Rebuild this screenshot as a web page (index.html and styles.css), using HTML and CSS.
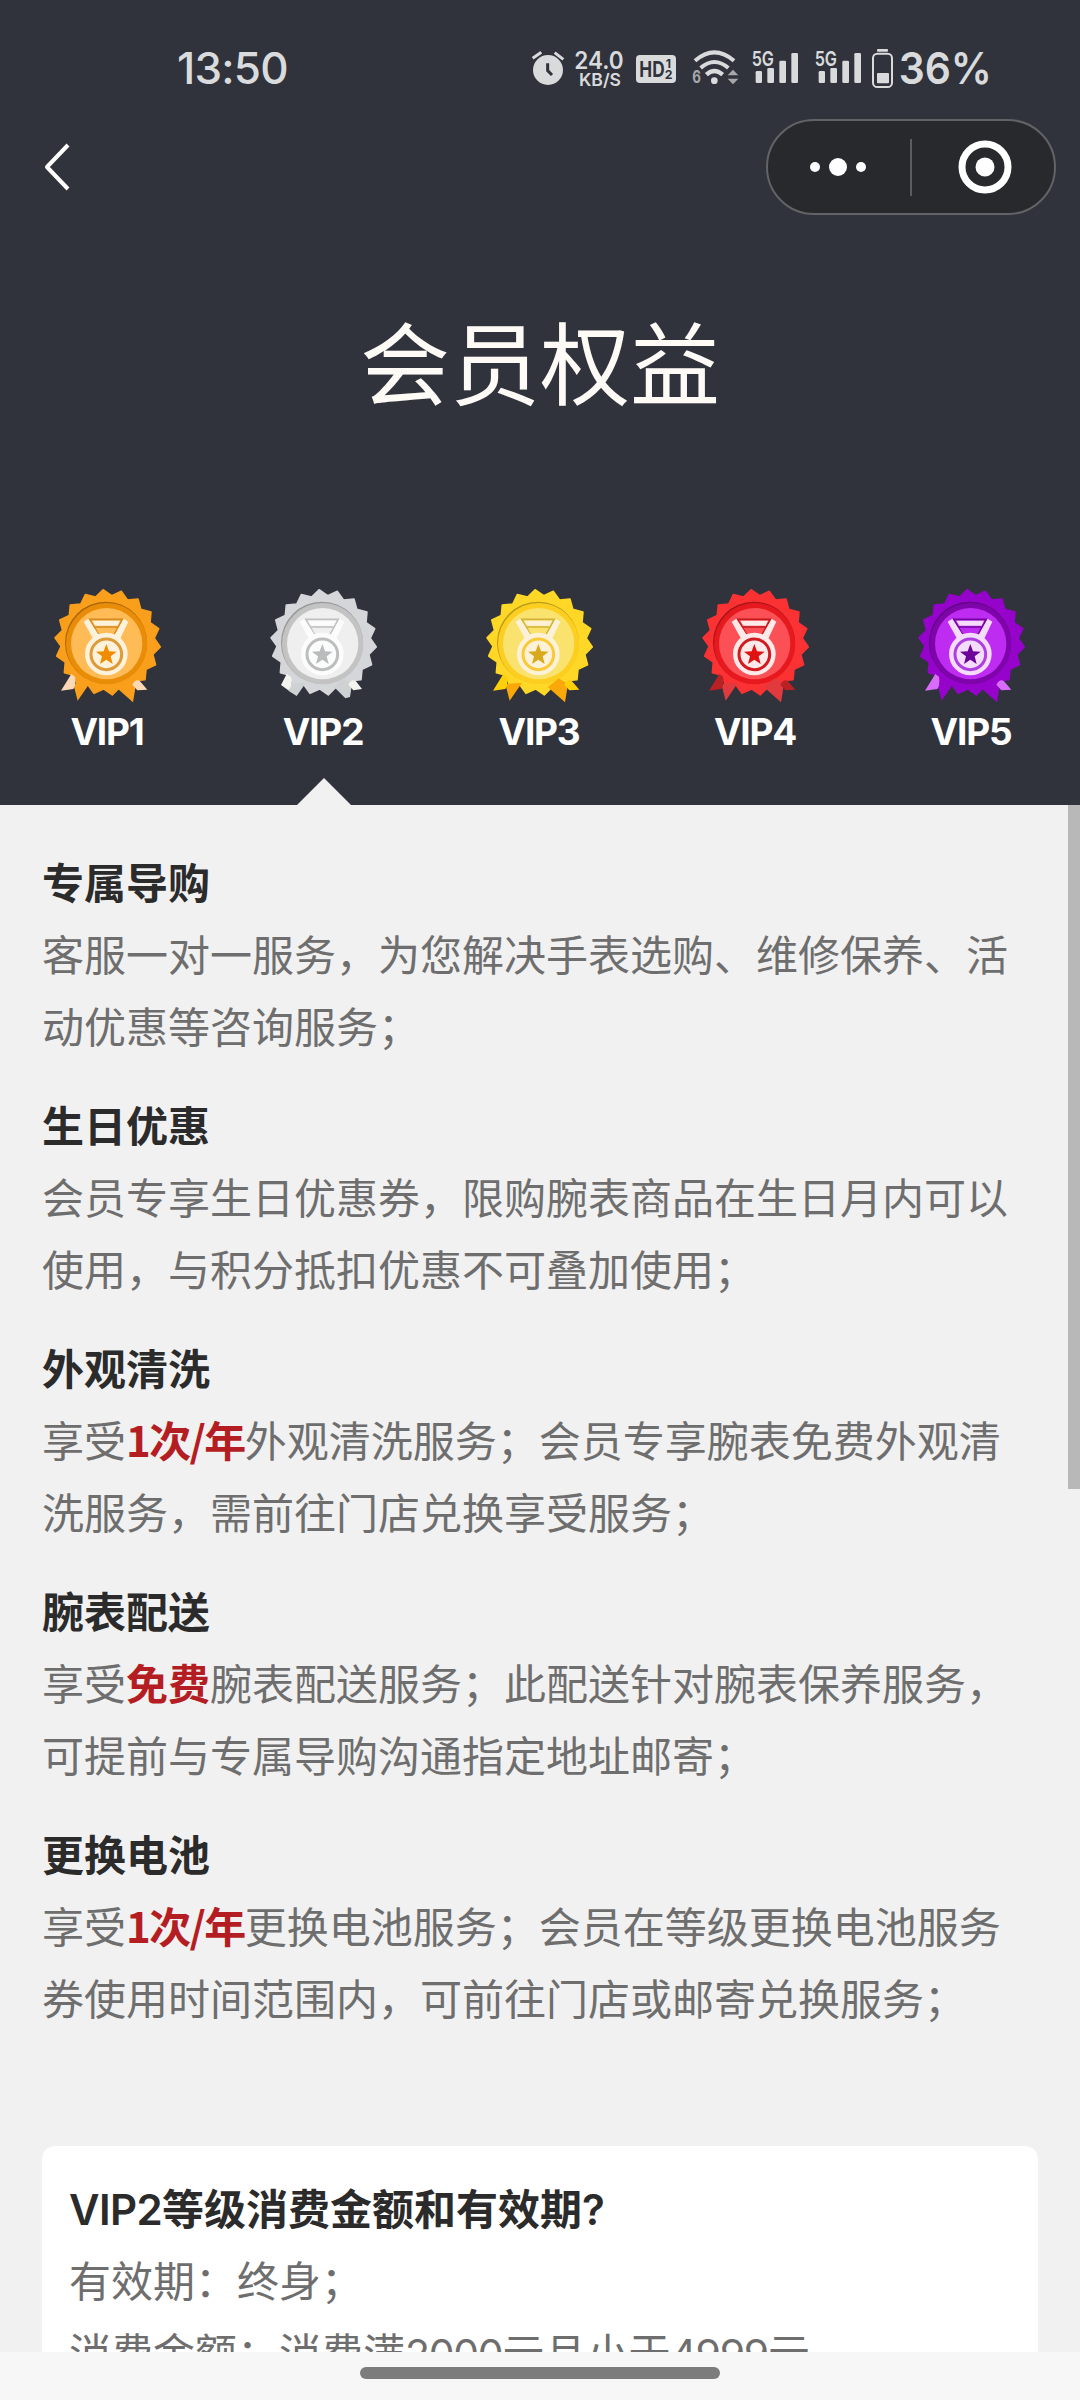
FILE: index.html
```html
<!DOCTYPE html>
<html lang="zh-CN">
<head>
<meta charset="utf-8">
<title>会员权益</title>
<link rel="stylesheet" href="styles.css">
</head>
<body>
<svg width="0" height="0" class="defs" aria-hidden="true">
  <symbol id="medal" viewBox="54 45 360 360">
    <polygon class="body" transform="translate(233 217) rotate(-5) scale(3.03)" points="0,-52.3 8,-45.6 17.9,-49.1 23.2,-40.1 33.6,-40.1 35.5,-29.8 45.3,-26.2 43.5,-15.8 51.5,-9.1 46.3,0 51.5,9.1 43.5,15.8 45.3,26.2 35.5,29.8 33.6,40.1 23.2,40.1 17.9,49.1 8,45.6 0,52.3 -8,45.6 -17.9,49.1 -23.2,40.1 -33.6,40.1 -35.5,29.8 -45.3,26.2 -43.5,15.8 -51.5,9.1 -46.3,0 -51.5,-9.1 -43.5,-15.8 -45.3,-26.2 -35.5,-29.8 -33.6,-40.1 -23.2,-40.1 -17.9,-49.1 -8,-45.6"/>
    <circle class="shade" cx="228" cy="218" r="123"/>
    <circle class="ring" cx="230" cy="221" r="122"/>
    <circle class="disc" cx="230" cy="221" r="107"/>
    <path class="line" d="M206 195 179 148h98l-25 47M194 171h68"/>
    <path class="cream" d="M187 152h83l-7 15h-67zM161 155l14-9 33 52-18 10zM295 155l-14-9-29 52 18 10z"/>
    <circle class="cream" cx="229" cy="252" r="64"/>
    <circle class="mid" cx="229" cy="253" r="46"/>
    <path class="star" d="M229 222 237 244 260 245 242 259 248 282 229 269 210 282 216 259 198 245 221 244z"/>
  </symbol>
  <symbol id="tails" viewBox="54 45 360 360">
    <path class="front" d="M130 342 143 392 180 338zM258 352 309 397 318 342 290 325z"/>
    <path class="tab" d="M124 312 93 362 130 357Q139 344 135 320zM307 344Q318 325 330 334L352 359 322 361z"/>
  </symbol>
  <symbol id="tails-short" viewBox="54 45 360 360">
    <path class="front" d="M130 342 127 362 152 378 180 338zM265 352 298 385 312 381 318 342 290 325z"/>
    <path class="tab" d="M122 312 105 345 127 361Q143 344 135 320zM307 344Q318 325 330 334L348 357 322 361z"/>
  </symbol>
</svg>

<div class="screen">
  <header class="top">
    <div class="status">
      <span class="time">13:50</span>
      <svg class="indicators" viewBox="0 0 1560 240">
        <g class="lit">
          <circle cx="144" cy="120" r="45"/>
          <path class="stroke" stroke-width="9" d="M98 85 124 67M190 88 164 68"/>
          <path class="cut" stroke-width="9" d="M143 100v22l13 13"/>
          <text x="223" y="118" font-size="72" font-weight="600" textLength="148" lengthAdjust="spacingAndGlyphs">24.0</text>
          <text x="237" y="168" font-size="52" font-weight="600" textLength="126" lengthAdjust="spacingAndGlyphs">KB/S</text>
          <rect x="408" y="75" width="120" height="84" rx="12"/>
          <g class="ink">
            <text x="418" y="141" font-size="66" font-weight="700" textLength="76" lengthAdjust="spacingAndGlyphs">HD</text>
            <text x="497" y="114" font-size="37" font-weight="700">1</text>
            <text x="494" y="148" font-size="37" font-weight="700">2</text>
          </g>
          <path class="stroke" stroke-width="12" d="M585 92Q643 42 702 92M602 114Q643 78 685 114"/>
          <path class="stroke" stroke-width="13" d="M619 134Q643 112 668 134"/>
          <circle cx="643" cy="152" r="10"/>
          <g class="dim">
            <text x="577" y="160" font-size="52" font-weight="700" textLength="26" lengthAdjust="spacingAndGlyphs">6</text>
            <path d="M683 136 699 119 715 136zM683 146h32l-16 17z"/>
          </g>
          <g id="signal">
            <text x="755" y="108" font-size="62" font-weight="600" textLength="67" lengthAdjust="spacingAndGlyphs">5G</text>
            <rect x="767" y="123" width="19" height="36" rx="4"/>
            <rect x="802" y="114" width="20" height="45" rx="4"/>
            <rect x="838" y="92" width="20" height="67" rx="4"/>
            <rect x="874" y="69" width="20" height="90" rx="4"/>
          </g>
          <use href="#signal" x="189"/>
          <rect x="1131" y="57" width="33" height="8" rx="3"/>
          <rect class="stroke" stroke-width="6" x="1119" y="71" width="57" height="100" rx="13"/>
          <rect x="1131" y="129" width="36" height="31" rx="3"/>
          <text x="1196" y="162" font-size="133" font-weight="600" textLength="280" lengthAdjust="spacingAndGlyphs">36%</text>
        </g>
      </svg>
    </div>
    <nav class="nav">
      <svg class="back" viewBox="0 0 32 52"><path d="M27 4 6 26l21 22"/></svg>
      <div class="capsule">
        <svg class="more" viewBox="0 0 60 30"><circle cx="7" cy="15" r="5"/><circle cx="30" cy="15" r="9"/><circle cx="53" cy="15" r="5"/></svg>
        <i class="divider"></i>
        <svg class="close" viewBox="0 0 54 54"><circle class="outer" cx="27" cy="27" r="23"/><circle cx="27" cy="27" r="9.5"/></svg>
      </div>
    </nav>
    <h1 class="title">会员权益</h1>
    <div class="levels">
      <div class="level orange"><svg class="badge"><use href="#medal"/><use href="#tails"/></svg><span>VIP1</span></div>
      <div class="level silver active"><svg class="badge"><use href="#medal"/><use href="#tails-short"/></svg><span>VIP2</span></div>
      <div class="level gold"><svg class="badge"><use href="#medal"/><use href="#tails"/></svg><span>VIP3</span></div>
      <div class="level red"><svg class="badge"><use href="#medal"/><use href="#tails"/></svg><span>VIP4</span></div>
      <div class="level purple"><svg class="badge"><use href="#medal"/><use href="#tails"/></svg><span>VIP5</span></div>
    </div>
  </header>

  <main class="content">
    <section class="benefit">
      <h2>专属导购</h2>
      <p>客服一对一服务，为您解决手表选购、维修保养、活<br>动优惠等咨询服务；</p>
    </section>
    <section class="benefit">
      <h2>生日优惠</h2>
      <p>会员专享生日优惠券，限购腕表商品在生日月内可以<br>使用，与积分抵扣优惠不可叠加使用；</p>
    </section>
    <section class="benefit">
      <h2>外观清洗</h2>
      <p>享受<b class="rate">1次/年</b>外观清洗服务；会员专享腕表免费外观清<br>洗服务，需前往门店兑换享受服务；</p>
    </section>
    <section class="benefit">
      <h2>腕表配送</h2>
      <p>享受<b>免费</b>腕表配送服务；此配送针对腕表保养服务，<br>可提前与专属导购沟通指定地址邮寄；</p>
    </section>
    <section class="benefit">
      <h2>更换电池</h2>
      <p>享受<b class="rate">1次/年</b>更换电池服务；会员在等级更换电池服务<br>券使用时间范围内，可前往门店或邮寄兑换服务；</p>
    </section>
    <section class="card">
      <h2><span class="latin">VIP2</span>等级消费金额和有效期<span class="mark">?</span></h2>
      <p>有效期：终身；<br>消费金额：消费满<span class="num">2000</span>元且小于<span class="num">4999</span>元</p>
    </section>
    <i class="scrollbar"></i>
  </main>

  <footer class="gesture"><i></i></footer>
</div>
</body>
</html>
```
FILE: styles.css
```css
* { box-sizing: border-box; margin: 0; padding: 0; }

body {
  width: 1080px;
  height: 2400px;
  overflow: hidden;
  font-family: Inter, "Noto Sans CJK SC", sans-serif;
}

.defs { position: absolute; }

.screen { display: flex; flex-direction: column; height: 2400px; }

.top {
  display: flex;
  flex-direction: column;
  height: 805px;
  background: #30333b;
  color: #fff;
}

.status {
  display: flex;
  justify-content: space-between;
  height: 110px;
  padding: 30px 60px 0 177px;
  color: #dadbdd;
}
.time { font-size: 44px; font-weight: 500; line-height: 77px; letter-spacing: -0.8px; }
.indicators { width: 520px; height: 80px; }
.lit { fill: #d9dadc; }
.indicators .stroke { fill: none; stroke: #d9dadc; }
.indicators .cut { fill: none; stroke: #30333b; }
.lit .ink { fill: #30333b; }
.lit .dim { fill: #a6a7aa; }

.nav {
  display: flex;
  align-items: center;
  justify-content: space-between;
  height: 114px;
  padding: 0 24px 0 41px;
}
.back { width: 32px; height: 52px; fill: none; stroke: #fff; stroke-width: 4; stroke-linejoin: round; }
.capsule {
  display: flex;
  align-items: center;
  width: 290px;
  height: 96px;
  padding-left: 40px;
  border: 2px solid #626367;
  border-radius: 48px;
  background: #28292d;
}
.more { width: 60px; height: 30px; fill: #fff; }
.divider { width: 2px; height: 57px; margin: 0 46px 0 42px; background: #5b5c60; }
.close { width: 54px; height: 54px; fill: #fff; }
.close .outer { fill: none; stroke: #fff; stroke-width: 7; }

.title {
  height: 361px;
  padding-top: 70px;
  color: #fefbf7;
  font: 400 90px/130px "Noto Sans CJK SC", sans-serif;
  text-align: center;
}

.levels { display: grid; grid-template-columns: repeat(5, 1fr); height: 220px; }
.level {
  display: flex;
  flex-direction: column;
  align-items: center;
  position: relative;
}
.badge { width: 120px; height: 120px; }
.level span { margin: 4px 2px 0 0; font-size: 37px; font-weight: 700; line-height: 45px; letter-spacing: -1.2px; }
.level.active::after {
  content: "";
  position: absolute;
  bottom: 0;
  width: 54px;
  height: 27px;
  background: #f1f1f1;
  clip-path: polygon(50% 0, 100% 100%, 0 100%);
}

.body { fill: var(--body); stroke: var(--body); stroke-width: 1.6; stroke-linejoin: round; }
.shade { fill: var(--shade); }
.ring { fill: var(--ring); }
.disc { fill: var(--disc); }
.cream { fill: var(--cream); }
.line { fill: none; stroke: var(--line); stroke-width: 5; }
.mid { fill: var(--cream); stroke: var(--mid); stroke-width: 9; }
.star { fill: var(--star); }
.tab { fill: var(--tab); }
.front { fill: var(--front); }

.orange { --body: #fa9f1c; --shade: #a8670a; --ring: #e98c07; --disc: #ffbb55; --cream: #fff2dc; --line: #d58a20; --mid: #dc9a38; --star: #f08c00; --tab: #fcd9b4; --front: #fa9f1c; }
.silver { --body: #d5d6d9; --shade: #98989a; --ring: #c3c3c4; --disc: #efefef; --cream: #fcfcfc; --line: #bfc0c0; --mid: #bcbebe; --star: #b9bbbc; --tab: #f3f4ee; --front: #cfd2d2; }
.gold { --body: #ffd827; --shade: #b89a1c; --ring: #fcce20; --disc: #fae26e; --cream: #fdf2d8; --line: #d3b23a; --mid: #fac938; --star: #d9a81c; --tab: #fdd008; --front: #faa70a; }
.red { --body: #fa3233; --shade: #a81519; --ring: #e61a1e; --disc: #fb5056; --cream: #ffe9e9; --line: #c5181c; --mid: #d01c1e; --star: #df1212; --tab: #b92125; --front: #e13a3e; }
.purple { --body: #9603cb; --shade: #5d0580; --ring: #7f05ab; --disc: #bd2cf0; --cream: #f6dcfc; --line: #74049f; --mid: #ad3fe0; --star: #6d049a; --tab: #d86dfd; --front: #9603cb; }

.content {
  position: relative;
  height: 1547px;
  padding: 40px 42px 0;
  overflow: hidden;
  background: #f1f1f1;
  color: #6e6e6e;
  font-family: "Noto Sans CJK SC", sans-serif;
  font-size: 42px;
  line-height: 72px;
  white-space: nowrap;
}
.content h2 { color: #2b2b2b; font-size: 42px; font-weight: 700; }
.benefit { margin-bottom: 27px; }
.benefit b { color: #b41e23; font-weight: 700; }
.benefit .rate { letter-spacing: -1.6px; }
.card {
  height: 300px;
  margin-top: 113px;
  padding: 25px 27px;
  border-radius: 13px;
  background: #fff;
}
.card span { font-family: Inter, sans-serif; line-height: 1; }
.latin { font-weight: 600; letter-spacing: -0.6px; }
.mark { font-weight: 600; }
.num { font-size: 41px; letter-spacing: -1.3px; }

.scrollbar {
  position: absolute;
  top: 0;
  right: 0;
  width: 12px;
  height: 684px;
  background: #b8b8b8;
}

.gesture {
  display: flex;
  justify-content: center;
  height: 48px;
  padding-top: 15px;
  background: #f7f7f7;
}
.gesture i { width: 360px; height: 12px; border-radius: 6px; background: #7c7c7c; }
```
